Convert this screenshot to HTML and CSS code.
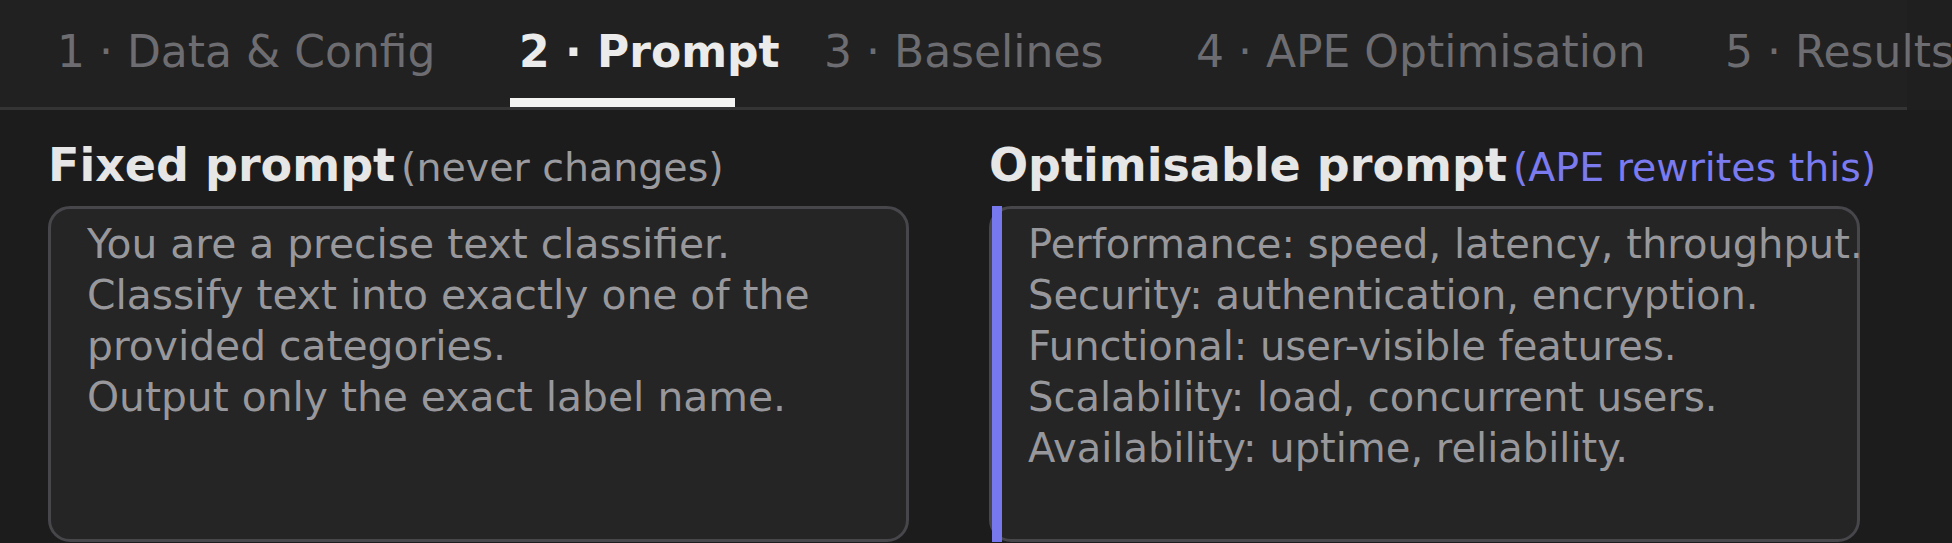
FILE: index.html
```html
<!DOCTYPE html>
<html lang="en">
<head>
    <meta charset="UTF-8">
    <meta name="viewport" content="width=device-width, initial-scale=1.0">
    <title>Prompt</title>
    <link rel="stylesheet" href="styles.css">
</head>
<body>
    <header class="topbar">
        <nav class="tabs">
            <div class="tab">1 · Data &amp; Config</div>
            <div class="tab active">2 · Prompt</div>
            <div class="tab">3 · Baselines</div>
            <div class="tab">4 · APE Optimisation</div>
            <div class="tab">5 · Results</div>
        </nav>
    </header>

    <main class="prompts">
        <section class="prompt-col">
            <h2 class="prompt-title">Fixed prompt<span class="note">(never changes)</span></h2>
            <div class="prompt-box">You are a precise text classifier.
Classify text into exactly one of the provided categories.
Output only the exact label name.</div>
        </section>
        <section class="prompt-col">
            <h2 class="prompt-title">Optimisable prompt<span class="note accent">(APE rewrites this)</span></h2>
            <div class="prompt-box editable">Performance: speed, latency, throughput.
Security: authentication, encryption.
Functional: user-visible features.
Scalability: load, concurrent users.
Availability: uptime, reliability.</div>
        </section>
    </main>
</body>
</html>
```

FILE: styles.css
```css
html, body {
    margin: 0;
    height: 100%;
    background-color: #1c1c1c;
    font-family: "DejaVu Sans", "Liberation Sans", sans-serif;
    overflow: hidden;
}
.topbar {
    background-color: #1f1f1f;
}
.tabs {
    display: grid;
    grid-template-columns: 462px 305px 372px 529px auto;
    width: 1907px;
    box-sizing: border-box;
    padding: 27px 0 0 57px;
    background-color: #212121;
    border-bottom: 3px solid #343434;
    white-space: nowrap;
}
.tab {
    position: relative;
    height: 80px;
    font-size: 44px;
    line-height: 50px;
    color: #6d6d71;
}
.tab.active {
    color: #ebebeb;
    font-weight: bold;
}
.tab.active::after {
    content: "";
    position: absolute;
    left: -9px;
    bottom: 0;
    width: 225px;
    height: 9px;
    background-color: #f4f4f2;
}
.prompts {
    display: grid;
    grid-template-columns: 861px 871px;
    gap: 80px;
    padding: 27px 0 0 48px;
}
.prompt-title {
    margin: 0 0 11px;
    font-size: 46px;
    line-height: 56px;
    font-weight: bold;
    color: #e6e6e6;
    white-space: nowrap;
}
.note {
    margin-left: 6px;
    font-size: 39.5px;
    font-weight: normal;
    color: #9b9b9f;
}
.note.accent {
    color: #7b7bef;
}
.prompt-box {
    position: relative;
    height: 336px;
    box-sizing: border-box;
    padding: 10px 36px;
    background-color: #252525;
    border: 3px solid #46464b;
    border-radius: 22px;
    font-size: 40.8px;
    line-height: 51px;
    color: #98989c;
    white-space: pre-wrap;
}
.prompt-box.editable {
    font-size: 40px;
    white-space: pre;
}
.prompt-box.editable::before {
    content: "";
    position: absolute;
    left: 0;
    top: -3px;
    bottom: -3px;
    width: 10px;
    background-color: #7878ee;
}
```
